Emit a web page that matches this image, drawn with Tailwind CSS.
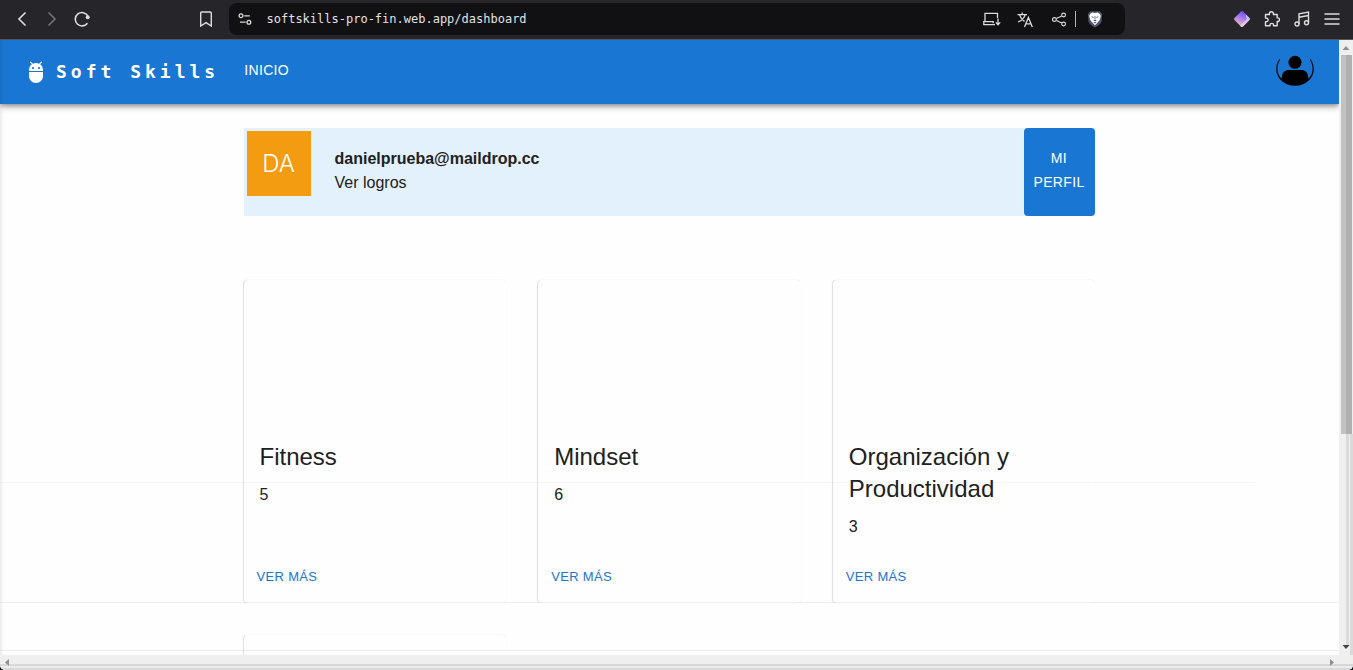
<!DOCTYPE html>
<html lang="es">
<head>
<meta charset="utf-8">
<title>Soft Skills</title>
<script src="https://cdn.jsdelivr.net/npm/@tailwindcss/browser@4"></script>
</head>
<body class="flex h-screen flex-col overflow-hidden bg-[#0d1420] font-['Liberation_Sans',sans-serif] text-[#212121]">
  <!-- Browser toolbar -->
  <header class="flex h-10 shrink-0 items-center border-b border-[#55555a] bg-[#26252a] pb-px text-[#dcdcde]">
    <div class="flex flex-1 items-center pr-[13px]">
      <button aria-label="Atrás" class="ml-4 h-4 w-3"><svg viewBox="0 0 12 16" class="h-4 w-3" fill="none" stroke="currentColor" stroke-width="1.6"><path d="M9.500 1.500 3 8l6.500 6.500"/></svg></button>
      <button aria-label="Adelante" class="ml-[18px] h-4 w-3 text-[#737378]"><svg viewBox="0 0 12 16" class="h-4 w-3" fill="none" stroke="currentColor" stroke-width="1.600"><path d="m2.500 1.500 6.500 6.500-6.500 6.500"/></svg></button>
      <button aria-label="Recargar" class="ml-4 size-4"><svg viewBox="0 0 16 16" class="size-4" fill="none" stroke="currentColor" stroke-width="1.600"><path d="M13.400 12.200A6.700 6.700 0 1 1 13.800 4.900"/><circle cx="13.700" cy="6.200" r="2" fill="currentColor" stroke="none"/></svg></button>
      <button aria-label="Guardar marcador" class="mr-[2px] ml-auto h-4 w-4"><svg viewBox="0 0 16 16" class="size-4" fill="none" stroke="currentColor" stroke-width="1.400"><path d="M3.700 1h8.600q1 0 1 1v13L8 11.600 2.700 15V2q0-1 1-1z"/></svg></button>
    </div>
    <div class="flex h-8 w-[896px] shrink-0 items-center rounded-lg bg-[#111113] pl-2">
      <button aria-label="Información del sitio" class="size-4"><svg viewBox="0 0 16 16" class="size-4" fill="none" stroke="currentColor" stroke-width="1.300"><circle cx="4" cy="4.800" r="1.900"/><path d="M7.200 4.800h5.600M3 11.200h5.600"/><circle cx="11.900" cy="11.200" r="1.900"/></svg></button>
      <input aria-label="Dirección" readonly value="softskills-pro-fin.web.app/dashboard" class="ml-[14px] block h-6 min-w-0 flex-1 bg-transparent font-['DejaVu_Sans_Mono',monospace] text-xs text-[#e2e2e4] outline-none">
      <div class="mr-[22px] flex items-center">
        <button aria-label="Instalar" class="size-[18px]"><svg viewBox="0 0 18 18" class="size-[18px]" fill="none" stroke="currentColor" stroke-width="1.300"><path d="M14.500 8V3.400H2v8.300M12 14.700H.8v-3h9.400v1.500M15 8.500V14M12.800 12.400l2.200 2.300 2.200-2.300"/></svg></button>
        <button aria-label="Traducir" class="ml-4 size-[17px]"><svg viewBox="0 0 17 17" class="size-[17px]" fill="none" stroke="currentColor" stroke-width="1.300"><path d="M.5 3.600H10M5.200 1.500v2M2.500 3.600c.8 3 3 5.400 5 6.800M8.100 3.600C7.300 7 4.200 9.800 1 11M7.500 16l3.900-9.500L15.300 16M8.900 12.900h5"/></svg></button>
        <button aria-label="Compartir" class="ml-[18px] size-[15px]"><svg viewBox="0 0 15 15" class="size-[15px]" fill="none" stroke="currentColor" stroke-width="1.100"><circle cx="2.400" cy="7.500" r="1.900"/><circle cx="11.600" cy="3" r="1.900"/><circle cx="11.600" cy="12" r="1.900"/><path d="m4.300 6.600 5.500-2.700M4.300 8.400l5.500 2.700"/></svg></button>
        <span class="ml-2 h-4 w-px bg-[#b4b4b8]"></span>
        <button aria-label="Escudos de Brave" class="ml-[11px] h-[18px] w-4"><svg viewBox="0 0 16 18" class="h-[18px] w-4"><path fill="#53546b" d="M3.400 1.200h9.200l1.500 1.600 1 1.200-.6 7.500q-.8 3-6.500 6-5.700-3-6.500-6L.9 4l1-1.200z"/><path fill="#fff" d="m5.300 2.500 2.700.6 2.700-.6 2.200 1.500.9 2-1.200 4.300-2.200 2.500L8 15.200l-2.400-2.400-2.200-2.500L2.200 6l.9-2z"/><path fill="#53546b" d="m4 6.300 2.700.6-.4 1.300zm8 0-2.700.6.400 1.300zM6.300 10.300 8 9.600l1.700.7L8 11.500zM7.600 6h.8v3h-.8zM6.300 12.600 8 11.900l1.700.7L8 13.500z"/></svg></button>
      </div>
    </div>
    <div class="flex flex-1 items-center justify-end gap-[14px] pr-[13px]">
      <button aria-label="Extensión" class="size-4"><svg viewBox="0 0 16 16" class="size-4"><defs><linearGradient id="gem" x1="0.700" y1="0" x2="0.250" y2="1"><stop offset="0" stop-color="#6344ff"/><stop offset=".45" stop-color="#a37af0"/><stop offset="1" stop-color="#ffc5a5"/></linearGradient></defs><path fill="url(#gem)" d="M6.900.5q1.100-.8 2.200 0l6.400 6.400q.8 1.100 0 2.200l-6.400 6.400q-1.100.8-2.200 0L.5 9.100q-.8-1.100 0-2.200z"/><path fill="#e7d5fa" fill-opacity=".75" d="m11.500 3 4 3.900q.8 1.100 0 2.200l-6.400 6.400q-1.100.8-2.200 0l-.8-.8L12.700 8z"/></svg></button>
      <button aria-label="Extensiones" class="size-4"><svg viewBox="0 0 16 16" class="size-4" fill="none" stroke="currentColor" stroke-width="1.400"><path d="M1.500 3.500h4C4.900 1.700 6 .8 7.400.8s2.500.9 1.900 2.700h3.900v3.400c1.500-.3 2.300.7 2.300 1.800s-.8 2.100-2.300 1.800v4.200H9.500c.4-1.500-.5-2.300-1.700-2.300s-2.100.8-1.700 2.300H1.500v-4c1.700.3 2.600-.7 2.600-1.800S3.200 6.800 1.500 7.100z" stroke-linejoin="round"/></svg></button>
      <button aria-label="Multimedia" class="size-4"><svg viewBox="0 0 16 16" class="size-4" fill="none" stroke="currentColor" stroke-width="1.400"><circle cx="3" cy="13" r="2"/><circle cx="12.500" cy="11.800" r="2"/><path d="M5 13V2.800l9.500-1.700v10.700M5 6.200l9.500-1.700"/></svg></button>
      <button aria-label="Menú" class="size-4"><svg viewBox="0 0 16 16" class="size-4" fill="none" stroke="currentColor" stroke-width="1.600"><path d="M.5 3h15M.5 8h15M.5 13h15"/></svg></button>
    </div>
  </header>

  <div class="flex min-h-0 flex-1">
    <div class="relative min-w-0 flex-1 overflow-hidden bg-[#fefefe]">
      <nav class="relative flex h-16 items-center bg-[#1976d2] px-6 text-white shadow-[0_2px_4px_-1px_rgba(0,0,0,0.3),0_4px_5px_rgba(0,0,0,0.16),0_1px_10px_rgba(0,0,0,0.12)]">
        <a href="#" class="flex items-center font-['DejaVu_Sans_Mono',monospace] text-lg font-bold tracking-[4px] whitespace-pre">
          <svg viewBox="0 0 24 24" class="mr-2 size-6" fill="currentColor" aria-hidden="true"><path d="M5 16c0 3.870 3.130 7 7 7s7-3.130 7-7v-4H5v4zM16.120 4.370l2.100-2.100-.82-.83-2.300 2.310C14.160 3.280 13.120 3 12 3s-2.160.28-3.090.75L6.600 1.440l-.82.83 2.100 2.100C6.140 5.640 5 7.680 5 10v1h14v-1c0-2.320-1.140-4.360-2.880-5.630zM9 9c-.55 0-1-.45-1-1s.45-1 1-1 1 .45 1 1-.45 1-1 1zm6 0c-.55 0-1-.45-1-1s.45-1 1-1 1 .45 1 1-.45 1-1 1z"/></svg>Soft Skills</a>
        <a href="#" class="ml-[25px] pb-1 text-sm tracking-wide">INICIO</a>
        <button aria-label="Cuenta" class="mr-px mb-1 ml-auto"><svg viewBox="0 0 38 32" class="h-8 w-[38px] text-black" fill="currentColor"><circle cx="19" cy="8.300" r="6.500"/><path d="M5.800 24.500V23C6 18.500 9 16 13 16h12c4 0 7 2.500 7.200 7v1.500C28.500 29 24 31 19 31S9.500 29 5.800 24.500z"/><path d="M3.500 5C-2 13 0 21.500 5 26.200 12.500 33.700 25.500 33.700 33 26.200 38 21.500 40 13 34.500 5l-.6.400C38.300 13 37 20.500 32.200 24.700L26 27H12l-6.200-2.300C1 20.500-.3 13 4.100 5.400z"/></svg></button>
      </nav>

      <main class="mx-auto w-full max-w-[900px] px-6 pt-6">
        <section class="mr-px flex h-[88px] bg-[#e3f1fc]">
          <div class="m-[3px] flex h-[65px] w-16 items-center justify-center bg-[#f39c12] font-['Inter',sans-serif] text-2xl font-light text-white">DA</div>
          <div class="ml-[21px] flex-1 pt-[19px] text-base leading-6">
            <p class="font-bold">danielprueba@maildrop.cc</p>
            <a href="#">Ver logros</a>
          </div>
          <button class="w-[71px] rounded bg-[#1976d2] px-2 pb-1 text-sm leading-6 tracking-wide text-white">MI PERFIL</button>
        </section>

        <section class="mt-16 grid grid-cols-3 gap-8">
          <article class="flex min-h-[323px] flex-col rounded bg-[#fefefe] shadow-[-1px_0_1px_rgba(0,0,0,0.12),0_0_1px_rgba(0,0,0,0.1)]">
            <div class="h-[161px]"></div>
            <div class="px-4"><h2 class="text-2xl leading-8">Fitness</h2><p class="mt-[10px]">5</p></div>
            <div class="mt-auto px-2 pb-[11px]"><button class="px-[5px] py-1 text-[13px] leading-[22px] tracking-wide text-[#1976d2]">VER MÁS</button></div>
          </article>
          <article class="flex min-h-[323px] flex-col rounded bg-[#fefefe] shadow-[-1px_0_1px_rgba(0,0,0,0.12),0_0_1px_rgba(0,0,0,0.1)]">
            <div class="h-[161px]"></div>
            <div class="px-4"><h2 class="text-2xl leading-8">Mindset</h2><p class="mt-[10px]">6</p></div>
            <div class="mt-auto px-2 pb-[11px]"><button class="px-[5px] py-1 text-[13px] leading-[22px] tracking-wide text-[#1976d2]">VER MÁS</button></div>
          </article>
          <article class="flex min-h-[323px] flex-col rounded bg-[#fefefe] shadow-[-1px_0_1px_rgba(0,0,0,0.12),0_0_1px_rgba(0,0,0,0.1)]">
            <div class="h-[161px]"></div>
            <div class="px-4"><h2 class="text-2xl leading-8">Organización y Productividad</h2><p class="mt-[10px]">3</p></div>
            <div class="mt-auto px-2 pb-[11px]"><button class="px-[5px] py-1 text-[13px] leading-[22px] tracking-wide text-[#1976d2]">VER MÁS</button></div>
          </article>
          <article class="min-h-[323px] rounded bg-[#fefefe] shadow-[-1px_0_1px_rgba(0,0,0,0.12),0_0_1px_rgba(0,0,0,0.1)]"></article>
        </section>
      </main>

      <!-- Faint horizontal rules over the page -->
      <div class="pointer-events-none absolute inset-x-0 top-[442px] mr-[84px] h-px bg-black/3"></div>
      <div class="pointer-events-none absolute inset-x-0 top-[562px] h-px bg-black/5"></div>
      <div class="pointer-events-none absolute inset-x-0 top-[610px] h-px bg-black/7"></div>
      <div class="pointer-events-none absolute inset-y-0 left-0 w-1 bg-linear-to-r from-black/7 to-transparent"></div>
    </div>

    <!-- Vertical scrollbar -->
    <div class="flex w-[14px] shrink-0 flex-col bg-[#efefef]">
      <svg viewBox="0 0 14 15" class="h-[15px] w-[14px]" aria-hidden="true"><path fill="#8f8f8f" d="M3.500 10 7 6l3.500 4z"/></svg>
      <div class="ml-[2px] flex h-[379px] w-[11px] justify-end bg-[#c1c1c1]"><div class="w-[6px] bg-[#b0b0b0]"></div></div>
      <div class="flex flex-1 justify-end gap-px"><div class="w-[3px] bg-[#dadada]"></div><div class="w-[3px] bg-[#dadada]"></div></div>
      <svg viewBox="0 0 14 15" class="h-[15px] w-[14px]" aria-hidden="true"><path fill="#dadada" d="M7 0h3v7H7zM11 0h3v15h-3z"/><path fill="#444" d="M3.500 5h7L7 9z"/></svg>
    </div>
  </div>

  <!-- Horizontal scrollbar -->
  <div class="relative h-[15px] shrink-0 overflow-hidden rounded-b-[5px] bg-[#efefef]">
    <div class="absolute inset-x-0 bottom-0 h-[6px] border-y-2 border-[#d8d8d8] bg-[#ebebeb]"></div>
    <div class="relative flex h-[15px] items-center justify-between pr-[14px]">
      <svg viewBox="0 0 14 15" class="h-[15px] w-[14px]" aria-hidden="true"><path fill="#8f8f8f" d="M9 4v7L5 7.500z"/></svg>
      <svg viewBox="0 0 14 15" class="h-[15px] w-[14px]" aria-hidden="true"><path fill="#8f8f8f" d="M5 4v7l4-3.500z"/></svg>
    </div>
  </div>
</body>
</html>
